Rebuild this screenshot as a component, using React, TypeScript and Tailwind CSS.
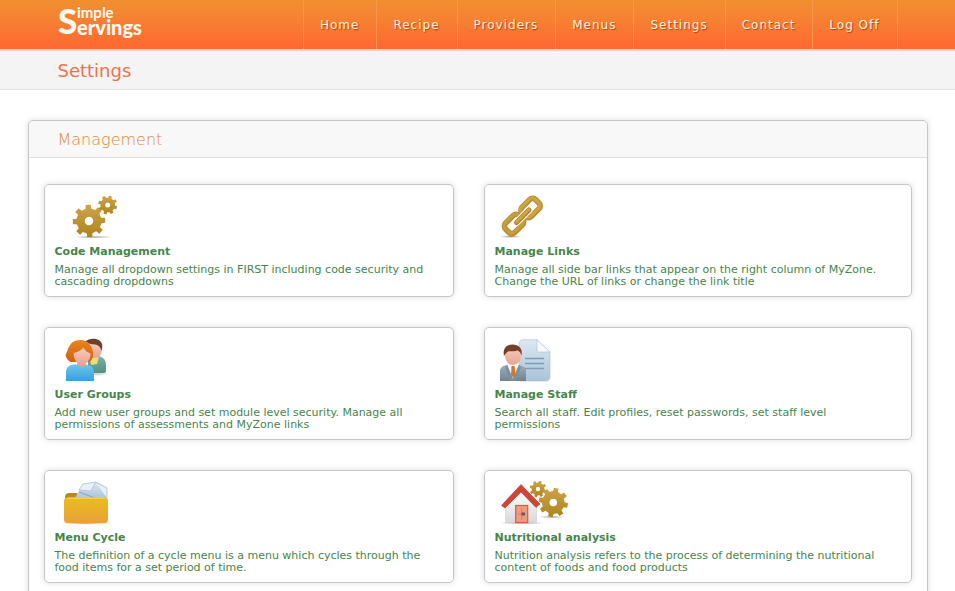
import type { ReactNode } from "react";

const NAV = ["Home", "Recipe", "Providers", "Menus", "Settings", "Contact", "Log Off"];

/** Builds the outline of a toothed wheel around (cx, cy). */
function gearPath(cx: number, cy: number, outer: number, root: number, teeth: number, turn: number) {
  const step = (Math.PI * 2) / teeth;
  const points: string[] = [];
  for (let i = 0; i < teeth; i++) {
    const mid = turn + i * step;
    const corners: [number, number][] = [
      [root, mid - step * 0.28],
      [outer, mid - step * 0.2],
      [outer, mid + step * 0.2],
      [root, mid + step * 0.28],
    ];
    for (const [r, a] of corners) {
      points.push(`${(cx + r * Math.cos(a)).toFixed(2)} ${(cy + r * Math.sin(a)).toFixed(2)}`);
    }
  }
  return `M${points.join("L")}Z`;
}

function Gear({ cx, cy, r, hole, teeth = 8, turn = 0.2 }: { cx: number; cy: number; r: number; hole: number; teeth?: number; turn?: number }) {
  return (
    <g>
      <path d={gearPath(cx, cy, r, r * 0.77, teeth, turn)} fill="url(#gold)" strokeLinejoin="round" />
      <circle cx={cx} cy={cy} r={hole + 0.8} fill="#b98f2e" />
      <circle cx={cx} cy={cy} r={hole} fill="#fff" />
    </g>
  );
}

function Icon({ children }: { children: ReactNode }) {
  return (
    <svg width="80" height="48" viewBox="0 0 80 48" className="block" aria-hidden="true">
      {children}
    </svg>
  );
}

function Gradients() {
  const defs: [string, string, string][] = [
    ["gold", "#cfa44a", "#ad821c"],
    ["folder", "#e9bd1d", "#e9a03b"],
    ["paper", "#dce8f2", "#a9c3d9"],
    ["shirt", "#6cc5ee", "#3a9fdb"],
    ["teal", "#7db3a4", "#4f9085"],
    ["suit", "#9fb0b9", "#6f838f"],
    ["skin", "#f8cdbb", "#e8a392"],
    ["hair", "#ea8420", "#d2610c"],
    ["wall", "#ffffff", "#d9d9db"],
  ];
  return (
    <svg width="0" height="0" className="absolute" aria-hidden="true">
      <defs>
        {defs.map(([id, from, to]) => (
          <linearGradient key={id} id={id} x1="0" y1="0" x2="0" y2="1">
            <stop offset="0" stopColor={from} />
            <stop offset="1" stopColor={to} />
          </linearGradient>
        ))}
        <radialGradient id="ground">
          <stop offset="0" stopColor="#777" stopOpacity=".75" />
          <stop offset="1" stopColor="#999" stopOpacity="0" />
        </radialGradient>
      </defs>
    </svg>
  );
}

const GearsIcon = () => (
  <Icon>
    <ellipse cx="38" cy="42" rx="20" ry="1.6" fill="url(#ground)" />
    <Gear cx={34} cy={26} r={16.4} hole={4.3} turn={-0.05} />
    <Gear cx={52.7} cy={10} r={9.6} hole={2.5} turn={0.3} />
  </Icon>
);

const LinkIcon = () => (
  <Icon>
    <ellipse cx="16" cy="41.6" rx="12" ry="1.6" fill="url(#ground)" />
    <g fill="none" strokeLinejoin="round">
      <g transform="rotate(-45 19 29)">
        <rect x="9.5" y="22.5" width="19" height="13" rx="4" stroke="#b88e30" strokeWidth="5.6" />
        <rect x="9.5" y="22" width="19" height="13" rx="4" stroke="#c89e3c" strokeWidth="3" />
      </g>
      <g transform="rotate(-45 35.5 13)">
        <rect x="26" y="6.5" width="19" height="13" rx="4" stroke="#b88e30" strokeWidth="5.6" />
        <rect x="26" y="6" width="19" height="13" rx="4" stroke="#cda548" strokeWidth="3" />
      </g>
      <path d="M21.5 27.5L34 15" stroke="#fff" strokeWidth="7" strokeLinecap="round" />
      <path d="M21.5 27.5L34 15" stroke="#b0852a" strokeWidth="5" strokeLinecap="round" />
      <path d="M21.5 27L34 14.5" stroke="#cda548" strokeWidth="2.6" strokeLinecap="round" />
    </g>
  </Icon>
);

const UsersIcon = () => (
  <Icon>
    <ellipse cx="42" cy="36" rx="13" ry="2" fill="url(#ground)" opacity=".6" />
    <path d="M33 35V22c2-3 5-4 8-4 6 0 10 3 10 9v6c0 1.500-1 2-3 2z" fill="url(#teal)" />
    <path d="M35 20l9-1-2 7-6 1z" fill="#e9dd7a" />
    <ellipse cx="40.500" cy="11.500" rx="6.500" ry="8" fill="url(#skin)" />
    <path d="M30 4C35-1 45 0 47 6c.6 2.500.2 5-.6 7-.6-4-3-6-6-6.500C36 6 33 6 30 4z" fill="#6a3f2b" />
    <path d="M25 2c8 0 12 5 13 12 .6 4-.5 8-4 10H16c-3-1-5-4-5.500-7C13 14 13 2 25 2z" fill="url(#hair)" />
    <path d="M11 43v-9c0-5 4-7.500 9-7.500h10c5 0 9 3 9 7.500v9z" fill="url(#shirt)" />
    <path d="M22 22h9v4.500c-1 3-7 3-9 0z" fill="#e5a391" />
    <path d="M18.500 15c4-.5 8-3 10-5.500 1 3 4 5 7 6 .5 6-4 11-8.500 11-5 0-8.500-5.500-8.500-11.500z" fill="url(#skin)" />
  </Icon>
);

const StaffIcon = () => (
  <Icon>
    <path d="M28 1.800H42L55 14v25c0 2.500-2 4-4 4H26c-1 0-2-1-2-2V6c0-2.500 1.800-4.200 4-4.200z" fill="url(#paper)" stroke="#a9bfd2" strokeWidth=".6" />
    <path d="M42 1.800L55 14H43.500c-1 0-1.500-.6-1.500-1.500z" fill="#f7fafc" stroke="#a9bfd2" strokeWidth=".6" />
    <path d="M30 20.500h19M30 25.500h19M30 30.500h19" stroke="#7f9cb4" strokeWidth="1.300" />
    <path d="M5 43V33c0-4 4-6 8-6h10c4 0 8 2 8 6v10z" fill="url(#suit)" />
    <path d="M12 26h12l-6 15z" fill="#f4f6f7" />
    <path d="M16.500 28h3l1 9-2 3-2.500-3z" fill="#d9742a" />
    <path d="M12 27l6 15 6-15 2 2-5 14h-6l-5-14z" fill="#7c909b" />
    <ellipse cx="18" cy="17.500" rx="8" ry="9.500" fill="url(#skin)" />
    <path d="M9 18c-1.500-7 2-11.500 8.500-11.500 6 0 10.500 4 9 11-.8-3-2-4-4-5-3 1.600-7 0-9.500 1-1.500 1-2.500 2.500-4 4.500z" fill="#75402b" />
  </Icon>
);

const FolderIcon = () => (
  <Icon>
    <ellipse cx="31" cy="42" rx="25" ry="1.800" fill="url(#ground)" />
    <path d="M10 22v-6c0-3 2-4 4-4h8l3 3h25v8z" fill="#b98a22" />
    <path d="M20 17L28 3 42 .7 52 7v11H20z" fill="url(#paper)" />
    <path d="M24 9L28 3 40.500 1l-4.500 9zM40.500 1L52 7v10" fill="#e9f0f7" stroke="#a3bbd0" strokeWidth=".7" />
    <path d="M24 11l16 6" stroke="#8ba8c2" strokeWidth="1.200" />
    <rect x="9" y="16.500" width="44" height="25.500" rx="3.500" fill="url(#folder)" />
    <path d="M12 17.200h38" stroke="#f6db6a" strokeWidth="1" />
  </Icon>
);

const HouseIcon = () => (
  <Icon>
    <ellipse cx="27" cy="42" rx="24" ry="1.600" fill="url(#ground)" />
    <ellipse cx="57" cy="36" rx="14" ry="1.500" fill="url(#ground)" />
    <Gear cx={43} cy={8} r={8.4} hole={2.2} turn={0.3} />
    <Gear cx={58.3} cy={21.5} r={14.8} hole={3.8} turn={0.2} />
    <path d="M10.500 41.500V22L26 8l15.500 14v19.500z" fill="url(#wall)" stroke="#c9c9cc" strokeWidth=".5" />
    <path d="M26 3.500L45 23l-4 3.500L26 11 10 27l-3.500-2.500z" fill="#cf4636" stroke="#b5392c" strokeWidth=".6" strokeLinejoin="round" />
    <rect x="20.700" y="24.500" width="12" height="17" fill="#ee9c80" stroke="#d0603f" strokeWidth="1.200" />
    <path d="M26.700 27v12M23 33h7" stroke="#d97555" strokeWidth=".8" />
    <rect x="26.500" y="31.500" width="3.500" height="3" fill="#6a5560" />
  </Icon>
);

const CARDS = [
  { title: "Code Management", text: "Manage all dropdown settings in FIRST including code security and cascading dropdowns", Art: GearsIcon },
  { title: "Manage Links", text: "Manage all side bar links that appear on the right column of MyZone. Change the URL of links or change the link title", Art: LinkIcon },
  { title: "User Groups", text: "Add new user groups and set module level security. Manage all permissions of assessments and MyZone links", Art: UsersIcon },
  { title: "Manage Staff", text: "Search all staff. Edit profiles, reset passwords, set staff level permissions", Art: StaffIcon },
  { title: "Menu Cycle", text: "The definition of a cycle menu is a menu which cycles through the food items for a set period of time.", Art: FolderIcon },
  { title: "Nutritional analysis", text: "Nutrition analysis refers to the process of determining the nutritional content of foods and food products", Art: HouseIcon },
];

function Logo() {
  return (
    <svg width="90" height="46" viewBox="0 0 90 46" className="overflow-visible" role="img" aria-label="Simple Servings" fill="#fffaf0" fontFamily="Lato, sans-serif">
      <text x="0" y="34" fontSize="35" fontWeight="900">S</text>
      <text x="19" y="18" fontSize="15" fontWeight="700">imple</text>
      <text x="19" y="35" fontSize="20" fontWeight="900">ervings</text>
    </svg>
  );
}

export default function App() {
  return (
    <div className="min-h-screen bg-white font-['DejaVu_Sans',Verdana,sans-serif]">
      <Gradients />
      <header className="h-[51px] border-b-2 border-[#f3d9bb] bg-linear-to-b from-[#f09030] to-[#ff6633]">
        <div className="mx-auto flex h-full max-w-[840px] justify-between">
          <a href="#" className="block">
            <Logo />
          </a>
          <nav className="flex border-l border-[#f9944c]">
            {NAV.map((item) => (
              <a
                key={item}
                href="#"
                className="flex items-center border-r border-[#f9944c] pr-[17px] pl-4 text-xs tracking-[1px] text-[#fff3dc] [text-shadow:1px_1px_1px_#a8481c]"
              >
                {item}
              </a>
            ))}
          </nav>
        </div>
      </header>

      <div className="border-b border-[#e4e4e4] bg-[#f4f4f4]">
        <h1 className="mx-auto max-w-[840px] pt-0.5 text-lg leading-9 text-[#ee7349]">Settings</h1>
      </div>

      <main className="px-4 pt-[30px] pb-8">
        <section className="mx-auto max-w-[900px] rounded-[5px] border border-[#c6c6c6] shadow-[0_0_6px_#ddd]">
          <h2 className="rounded-t-[5px] border-b border-[#dedede] bg-[#f8f8f8] px-[29px] pt-0.5 text-base leading-[34px] font-extralight text-[#d98840]">
            Management
          </h2>
          <div className="grid grid-cols-[410fr_428fr] gap-[30px] px-[15px] pt-[26px] pb-[30px]">
            {CARDS.map(({ title, text, Art }) => (
              <a
                key={title}
                href="#"
                className="block rounded-[5px] border border-[#c6c6c6] pt-[10px] pr-5 pb-2 pl-[10px] text-[11px] text-[#47854c] shadow-[0_0_6px_#ddd]"
              >
                <Art />
                <h3 className="leading-[18px] font-bold">{title}</h3>
                <p className="mt-[3px] leading-3">{text}</p>
              </a>
            ))}
          </div>
        </section>
      </main>
    </div>
  );
}
